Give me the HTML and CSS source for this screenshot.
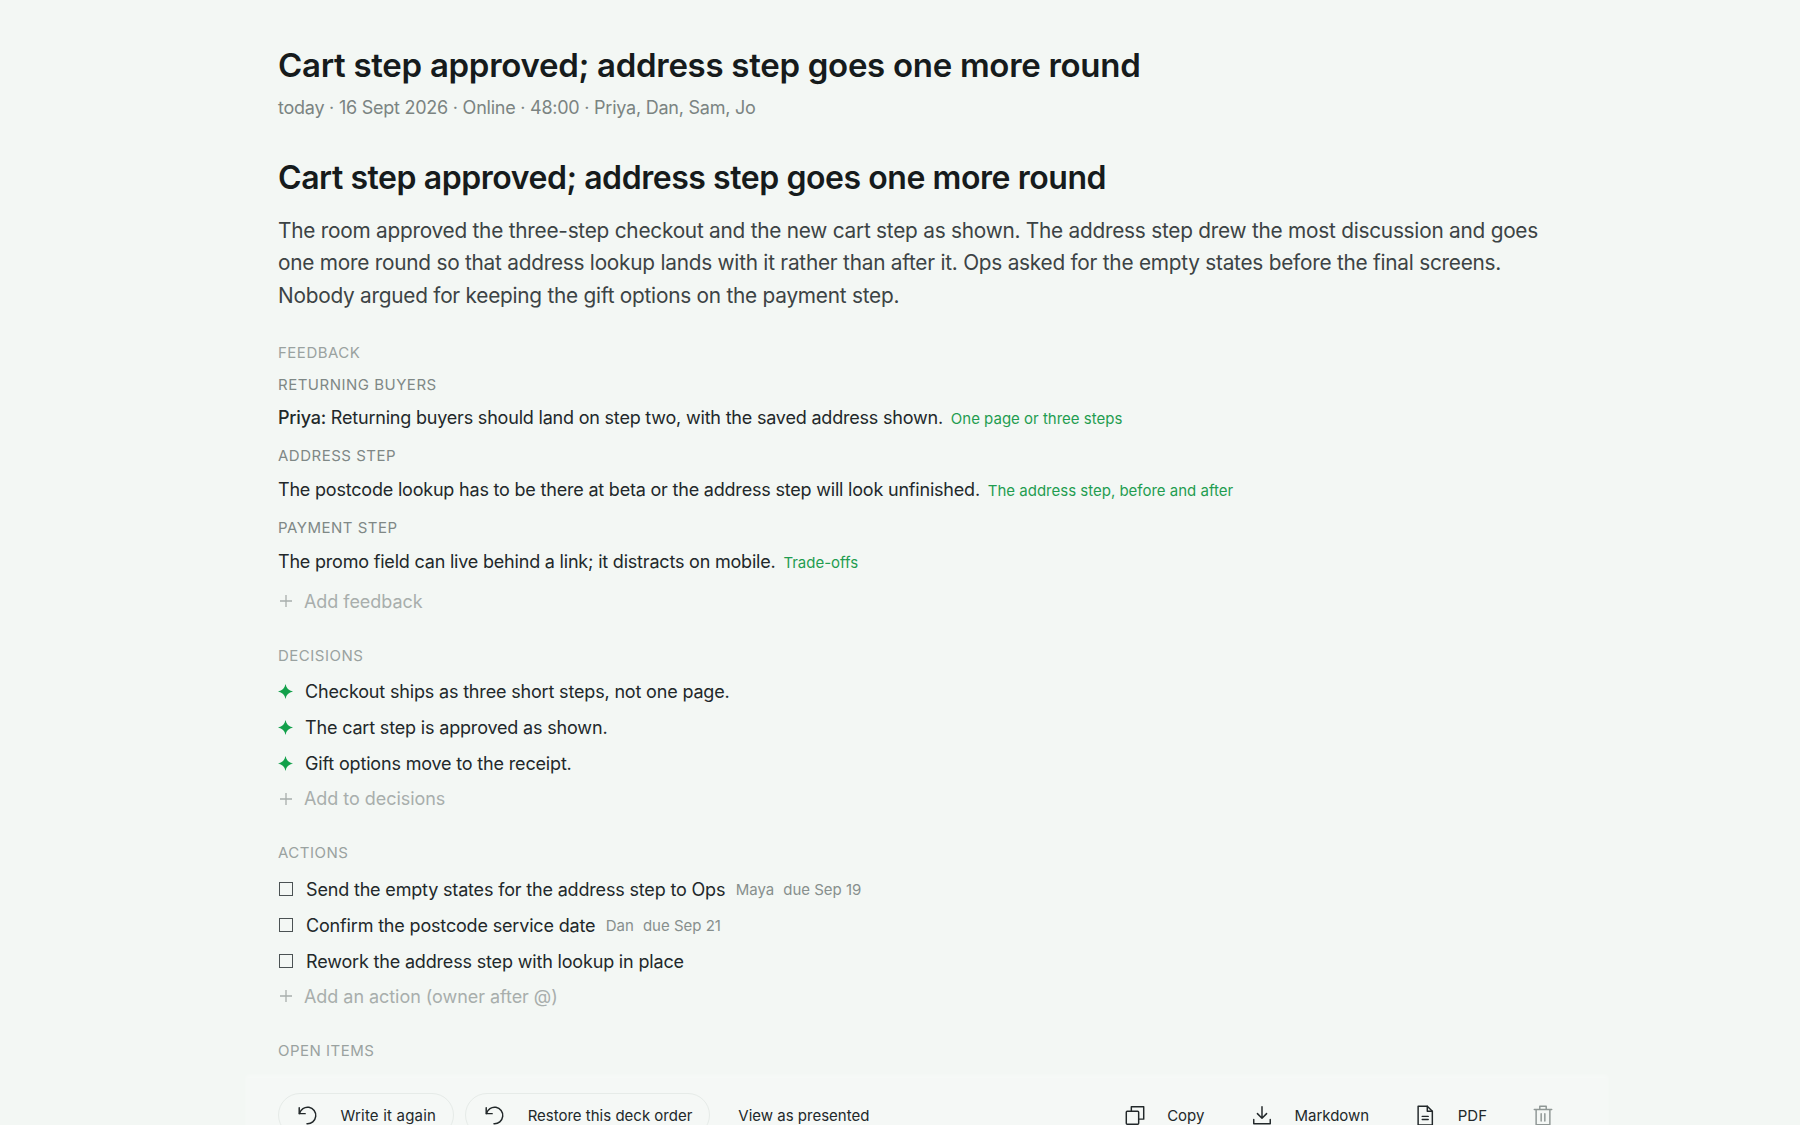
FILE: index.html
```html
<!DOCTYPE html>
<html lang="en">
<head>
<meta charset="utf-8">
<title>Cart step approved</title>
<link rel="stylesheet" href="styles.css">
</head>
<body>
<div class="page">
  <main class="doc">
    <h1 class="title">Cart step approved; address step goes one more round</h1>
    <p class="meta">today · 16 Sept 2026 · Online · 48:00 · Priya, Dan, Sam, Jo</p>
    <h2 class="headline">Cart step approved; address step goes one more round</h2>
    <p class="summary">The room approved the three-step checkout and the new cart step as shown. The address step drew the most discussion and goes one more round so that address lookup lands with it rather than after it. Ops asked for the empty states before the final screens. Nobody argued for keeping the gift options on the payment step.</p>

    <section class="sec sec-feedback">
      <h3 class="label">FEEDBACK</h3>
      <h4 class="sublabel">RETURNING BUYERS</h4>
      <p class="fb"><span class="who">Priya:</span> Returning buyers should land on step two, with the saved address shown. <a class="ref">One page or three steps</a></p>
      <h4 class="sublabel">ADDRESS STEP</h4>
      <p class="fb">The postcode lookup has to be there at beta or the address step will look unfinished. <a class="ref">The address step, before and after</a></p>
      <h4 class="sublabel">PAYMENT STEP</h4>
      <p class="fb">The promo field can live behind a link; it distracts on mobile. <a class="ref">Trade-offs</a></p>
      <div class="add add-fb"><span class="plus"><svg viewBox="0 0 16 16"><path d="M8 2v12M2 8h12"/></svg></span>Add feedback</div>
    </section>

    <section class="sec">
      <h3 class="label">DECISIONS</h3>
      <ul class="list">
        <li><span class="mark"><svg viewBox="0 0 14 14"><path d="M7 0C7.700 4 10 6.300 14 7C10 7.700 7.700 10 7 14C6.300 10 4 7.700 0 7C4 6.300 6.300 4 7 0Z"/></svg></span>Checkout ships as three short steps, not one page.</li>
        <li><span class="mark"><svg viewBox="0 0 14 14"><path d="M7 0C7.700 4 10 6.300 14 7C10 7.700 7.700 10 7 14C6.300 10 4 7.700 0 7C4 6.300 6.300 4 7 0Z"/></svg></span>The cart step is approved as shown.</li>
        <li><span class="mark"><svg viewBox="0 0 14 14"><path d="M7 0C7.700 4 10 6.300 14 7C10 7.700 7.700 10 7 14C6.300 10 4 7.700 0 7C4 6.300 6.300 4 7 0Z"/></svg></span>Gift options move to the receipt.</li>
      </ul>
      <div class="add"><span class="plus"><svg viewBox="0 0 16 16"><path d="M8 2v12M2 8h12"/></svg></span>Add to decisions</div>
    </section>

    <section class="sec sec-tight">
      <h3 class="label">ACTIONS</h3>
      <ul class="list list-actions">
        <li><span class="box"></span>Send the empty states for the address step to Ops <span class="owner">Maya</span><span class="due">due Sep 19</span></li>
        <li><span class="box"></span>Confirm the postcode service date <span class="owner">Dan</span><span class="due">due Sep 21</span></li>
        <li><span class="box"></span>Rework the address step with lookup in place</li>
      </ul>
      <div class="add"><span class="plus"><svg viewBox="0 0 16 16"><path d="M8 2v12M2 8h12"/></svg></span>Add an action (owner after @)</div>
    </section>

    <section class="sec sec-open">
      <h3 class="label">OPEN ITEMS</h3>
    </section>
  </main>

  <footer class="bar">
    <div class="bar-left">
      <button class="pill wide"><svg class="ico" viewBox="0 0 24 24"><path d="M3.500 4v6.500H10"/><path d="M3.800 10.500A9 9 0 1 1 12 21.500"/></svg>Write it again</button>
      <button class="pill"><svg class="ico" viewBox="0 0 24 24"><path d="M3.500 4v6.500H10"/><path d="M3.800 10.500A9 9 0 1 1 12 21.500"/></svg>Restore this deck order</button>
      <button class="plain">View as presented</button>
    </div>
    <div class="bar-right">
      <button class="tool"><svg class="ico" viewBox="0 0 24 24"><rect x="2.500" y="8" width="13.500" height="14" rx="1"/><path d="M8 8V3h13.500v13.500H16"/></svg>Copy</button>
      <button class="tool"><svg class="ico" viewBox="0 0 24 24"><path d="M12 3v12.500M7 10.500l5 5 5-5"/><path d="M3 17v4.500h18V17"/></svg>Markdown</button>
      <button class="tool"><svg class="ico" viewBox="0 0 24 24"><path d="M4.500 2.500h10L20 8v15H4.500z"/><path d="M14.500 2.500V8H20M9 13.500h6.500M9 17h6.500"/></svg>PDF</button>
      <button class="trash" aria-label="Delete"><svg class="ico" viewBox="0 0 24 24"><path d="M2.500 6h19M8.500 6V2.500h7V6M4.500 6v16.500h15V6M10 10.500v8M14 10.500v8"/></svg></button>
    </div>
  </footer>
</div>
</body>
</html>
```
FILE: styles.css
```css
* { box-sizing: border-box; }
html, body { margin: 0; padding: 0; height: 100%; overflow: hidden; }
body {
  background: #f3f7f4;
  color: #1b2021;
  font-family: "Inter", "Liberation Sans", sans-serif;
}
.page { width: 1800px; height: 1125px; overflow: hidden; }
.doc { width: 1350px; margin-left: 246px; padding: 45px 32px 0; height: 1078px; }
.title { margin: 0; font-size: 33px; line-height: 40px; font-weight: 600; letter-spacing: -0.29px; color: #161b1c; }
.meta { margin: 10px 0 0; font-size: 18px; line-height: 26px; letter-spacing: -0.24px; color: #7b8482; }
.headline { margin: 36.700px 0 0; font-size: 32px; line-height: 40px; font-weight: 600; letter-spacing: -0.44px; color: #161b1c; }
.summary { margin: 17px 0 0; font-size: 20.800px; line-height: 32.400px; letter-spacing: -0.24px; color: #3c4344; max-width: 1285px; }
.sec { margin-top: 28px; }
.sec-feedback { margin-top: 29.500px; }
.sec-tight { margin-top: 27px; }
.sec-open { margin-top: 27.500px; }
.label { margin: 0; font-size: 15px; line-height: 24px; font-weight: 400; letter-spacing: 0.5px; color: #9aa2a0; }
.sublabel { margin: 11px 0 0; font-size: 15px; line-height: 24px; font-weight: 400; letter-spacing: 0.5px; color: #7f8886; }
.label + .sublabel { margin-top: 7.500px; }
.fb { margin: 8.200px 0 0; font-size: 18px; line-height: 28px; letter-spacing: -0.2px; color: #22282a; }
.label + .sublabel + .fb { margin-top: 7px; }
.who { font-weight: 500; }
.ref { margin-left: 3px; font-size: 15px; letter-spacing: 0; color: #1f9d50; }
.add { display: flex; align-items: center; margin-top: 2px; height: 30px; font-size: 18px; letter-spacing: -0.05px; color: #a8aeac; }
.add-fb { margin-top: 9px; }
.plus { width: 26px; display: flex; }
.plus svg { width: 16px; height: 16px; fill: none; stroke: #a8aeac; stroke-width: 1.300; }
.list { list-style: none; margin: 5.500px 0 0; padding: 0; }
.list-actions { margin-top: 6.500px; }
.list li { display: flex; align-items: center; height: 36px; font-size: 18px; letter-spacing: -0.17px; color: #22282a; white-space: pre; }
.mark { width: 27px; display: flex; }
.mark svg { width: 15px; height: 15px; fill: #12a04a; }
.box { width: 14px; height: 14px; border: 1.500px solid #4b5253; margin-right: 13px; margin-left: 1px; }
.owner, .due { font-size: 15px; letter-spacing: 0; color: #878f8d; }
.owner { margin-left: 5.500px; }
.due { margin-left: 9px; }
.bar { display: flex; justify-content: space-between; width: 1362px; margin-left: 246px; padding: 15px 32px 0; height: 60px; background: #f5f8f6; box-shadow: 0 -3px 4px rgba(255, 255, 255, 0.3); font-size: 15px; color: #22282a; }
.bar button { font: inherit; color: inherit; background: none; border: 0; padding: 0; display: flex; align-items: center; height: 44px; }
.bar-left, .bar-right { display: flex; align-items: flex-start; }
.ico { width: 22px; height: 22px; fill: none; stroke: currentColor; stroke-width: 1.600; stroke-linecap: round; stroke-linejoin: round; }
.bar .pill { border: 1px solid #e6ebe8; border-radius: 24px; padding: 0 16.500px; margin-right: 11.500px; }
.bar .wide { letter-spacing: 0.2px; }
.pill .ico { margin-right: 23px; }
.bar .plain { margin-left: 17px; }
.bar-right { padding-right: 22px; }
.bar .tool { margin-right: 45px; }
.bar .tool:first-child { margin-right: 46.500px; }
.tool .ico { margin-right: 21.500px; }
.bar .trash { color: #8f9795; }
```
